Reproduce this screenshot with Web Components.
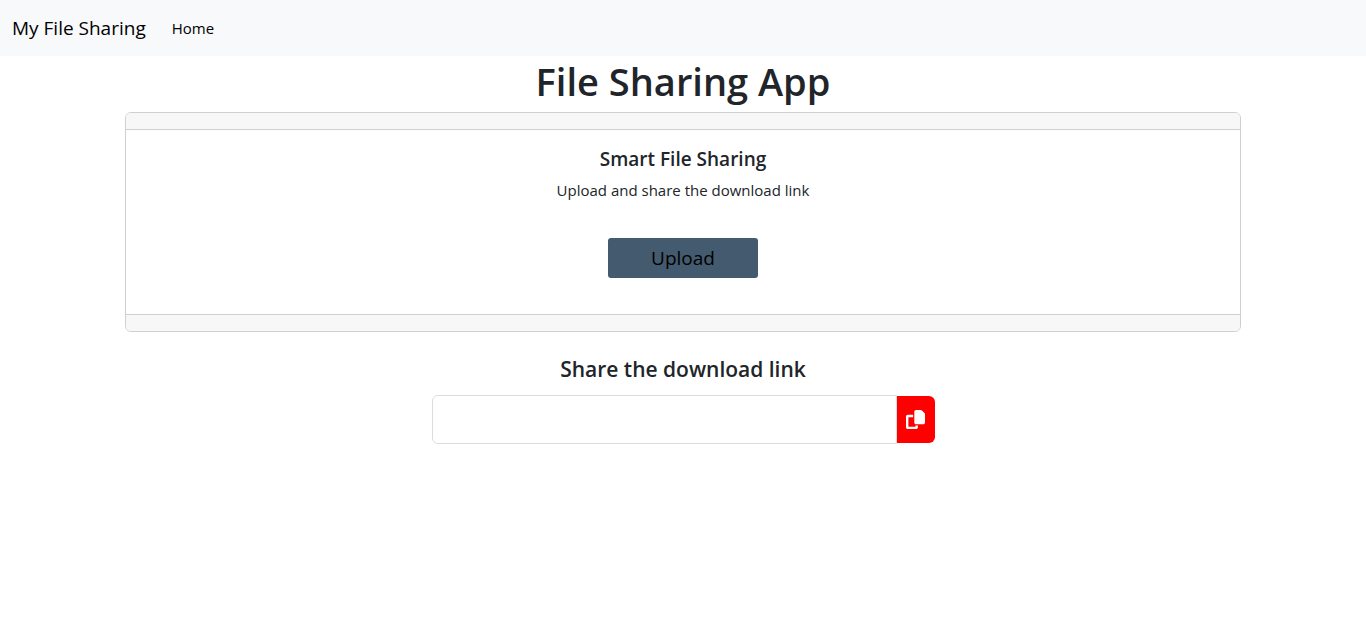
<!DOCTYPE html>
<html lang="en">
<head>
<meta charset="utf-8">
<meta name="viewport" content="width=device-width, initial-scale=1">
<title>My File Sharing</title>
<style>
body { margin: 0; background: #fff; color: #212529; font: 15px/24px "Segoe UI", "Open Sans", "Noto Sans", sans-serif; }
</style>
</head>
<body>
<file-app></file-app>
<script>
const define = (name, html) => customElements.define(name, class extends HTMLElement {
  constructor() {
    super();
    this.attachShadow({ mode: 'open' }).innerHTML = html;
  }
});

define('nav-bar', `
<style>
:host { display: block; background: #f8f9fb; }
nav { display: flex; align-items: center; gap: 26px; min-height: 56px; padding: 0 12px; box-sizing: border-box; }
::slotted(a) { color: #000; text-decoration: none; }
::slotted(a[slot=brand]) { font-size: 19px; line-height: 32px; }
</style>
<nav><slot name="brand"></slot><slot></slot></nav>`);

define('share-card', `
<style>
:host { display: block; border: 1px solid #d0d0d0; border-radius: 6px; overflow: hidden; background: #fff; }
header, footer { height: 16px; background: #f7f7f7; }
header { border-bottom: 1px solid #d0d0d0; }
footer { border-top: 1px solid #d0d0d0; }
.body { padding: 16px 16px 36px; text-align: center; }
</style>
<header></header><div class="body"><slot></slot></div><footer></footer>`);

define('upload-button', `
<style>
:host { display: block; }
button { width: 150px; height: 40px; padding: 0; border: 0; border-radius: 3px; background: #445a6f; color: #000; font: inherit; font-size: 19px; cursor: pointer; }
</style>
<button type="button"><slot></slot></button>`);

define('link-field', `
<style>
:host { display: flex; align-items: center; max-width: 503px; margin: 0 auto; }
input { flex: 1; min-width: 0; height: 49px; box-sizing: border-box; padding: 0 12px; border: 1px solid #dcdcdc; border-radius: 6px 0 0 6px; background: #fff; color: inherit; font: inherit; }
button { display: flex; align-items: center; justify-content: center; width: 38px; height: 47px; padding: 0; border: 0; border-radius: 0 6px 6px 0; background: #f00; color: #fff; cursor: pointer; }
svg { width: 19px; height: 19px; display: block; }
</style>
<input type="text" aria-label="Download link" readonly>
<button type="button" aria-label="Copy link"><svg viewBox="0 0 512 512" fill="currentColor" aria-hidden="true"><path d="M272 0H396.1c12.7 0 24.9 5.1 33.9 14.1l67.9 67.9c9 9 14.1 21.2 14.1 33.9V336c0 26.5-21.5 48-48 48H272c-26.5 0-48-21.5-48-48V48c0-26.5 21.5-48 48-48zM48 128H192v64H64V448H256V416h64v48c0 26.5-21.5 48-48 48H48c-26.5 0-48-21.5-48-48V176c0-26.5 21.5-48 48-48z"/></svg></button>`);

define('file-app', `
<style>
:host { display: block; }
main { text-align: center; }
h1, h2, h3, p { margin: 0; }
h1 { font-size: 38px; line-height: 50px; font-weight: 600; padding-bottom: 6px; }
.container { max-width: 1140px; margin: 0 auto; padding: 0 12px; box-sizing: border-box; }
h2 { font-size: 19px; line-height: 26px; font-weight: 600; margin-bottom: 6px; }
p { margin-bottom: 36px; }
h3 { font-size: 21px; line-height: 26px; font-weight: 600; margin: 24px 0 13px; }
</style>
<nav-bar><a slot="brand" href="#">My File Sharing</a><a href="#">Home</a></nav-bar>
<main>
<h1>File Sharing App</h1>
<div class="container">
<share-card>
<h2>Smart File Sharing</h2>
<p>Upload and share the download link</p>
<upload-button>Upload</upload-button>
</share-card>
</div>
<h3>Share the download link</h3>
<link-field></link-field>
</main>`);
</script>
</body>
</html>
